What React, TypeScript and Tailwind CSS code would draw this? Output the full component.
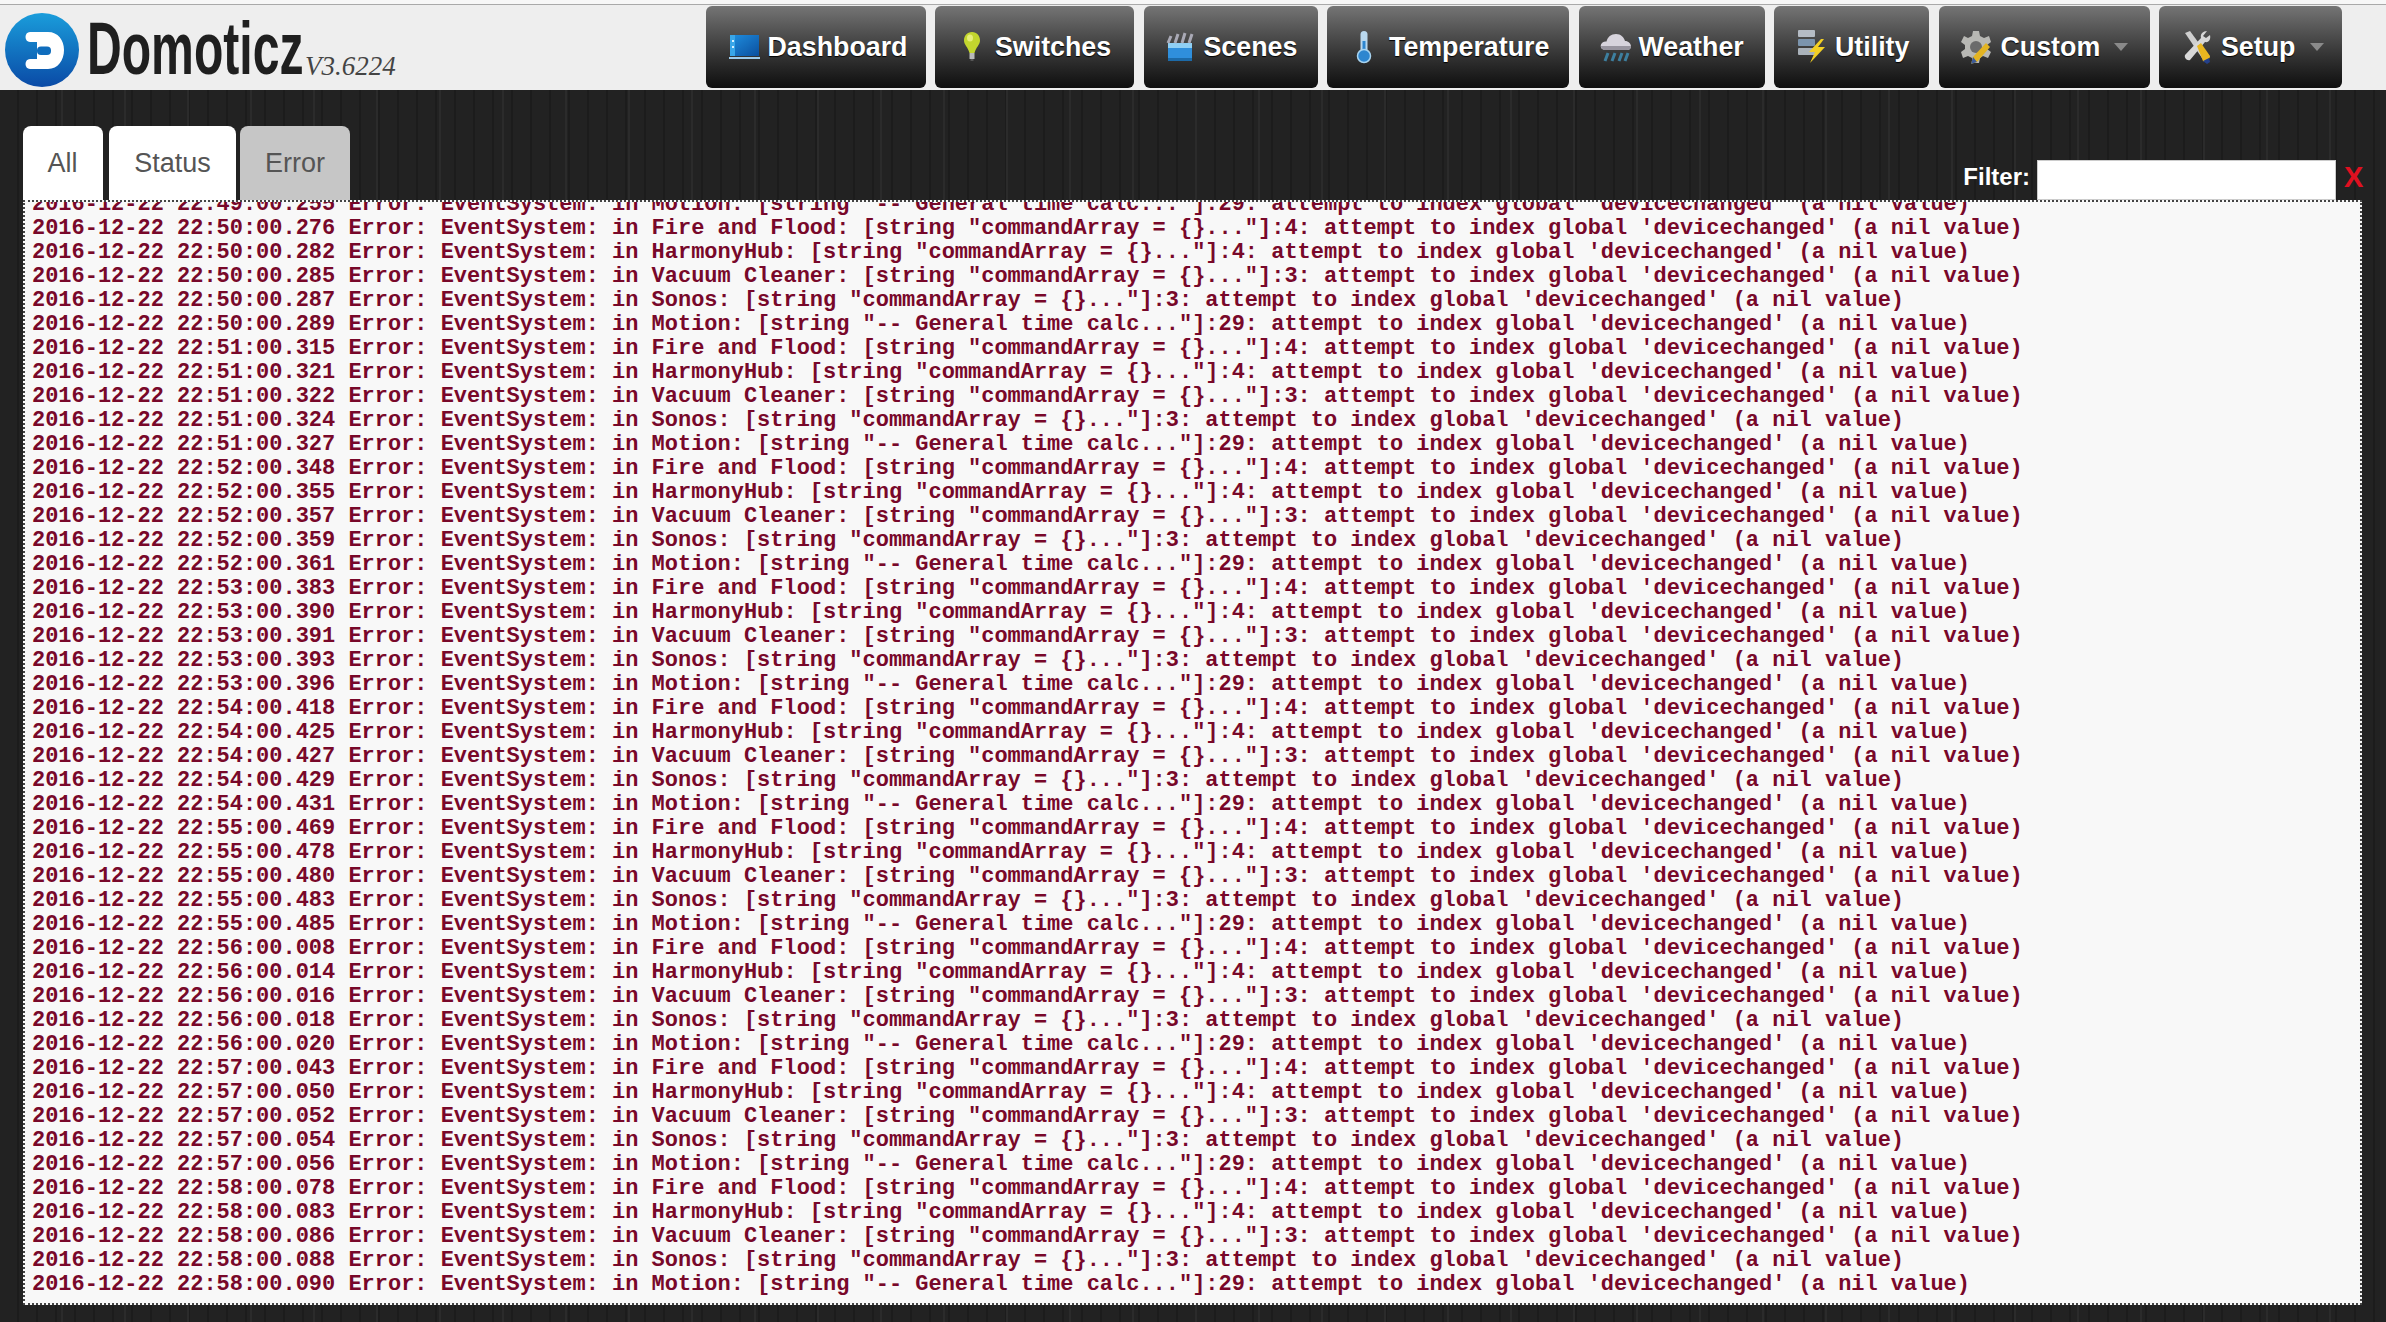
import React from 'react';

const DashboardIcon = () => (
  <svg width="31" height="27" viewBox="0 0 31 27">
    <defs>
      <linearGradient id="dash" x1="0" y1="0" x2="1" y2="1">
        <stop offset="0" stopColor="#1f8fe0" />
        <stop offset="1" stopColor="#0b4f9e" />
      </linearGradient>
    </defs>
    <rect x="1" y="1" width="29" height="21" fill="url(#dash)" />
    <rect x="1" y="1" width="5" height="21" fill="#39a6e8" />
    <rect x="3" y="6" width="2" height="2" fill="#d8f0ff" />
    <rect x="3" y="12" width="2" height="2" fill="#d8f0ff" />
    <rect x="0" y="23" width="31" height="2" fill="#9ccbec" />
  </svg>
);

const BulbIcon = () => (
  <svg width="20" height="32" viewBox="0 0 20 32">
    <path d="M10 1C5 1 2 5 2 9.500C2 14 6 16 7.500 22H12.500C14 16 18 14 18 9.500C18 5 15 1 10 1Z" fill="#c3d62e" />
    <ellipse cx="8" cy="7" rx="3" ry="3.500" fill="#e6ee7a" />
    <rect x="7.500" y="22" width="5" height="6" fill="#b9b9b9" />
    <rect x="8.500" y="28" width="3" height="2" fill="#555" />
  </svg>
);

const ScenesIcon = () => (
  <svg width="28" height="32" viewBox="0 0 28 32">
    <rect x="2" y="12" width="24" height="18" fill="#2f8fdc" />
    <rect x="2" y="12" width="24" height="5" fill="#8fd0f5" />
    <path d="M2 12 L5 5 M9 12 L12 3 M16 12 L19 2 M23 12 L26 3" stroke="#a9a9b5" strokeWidth="3" />
    <rect x="2" y="27" width="24" height="3" fill="#1c6aa8" />
  </svg>
);

const ThermometerIcon = () => (
  <svg width="16" height="34" viewBox="0 0 16 34">
    <rect x="4.500" y="1" width="7" height="24" rx="3.500" fill="#b9d8ee" />
    <rect x="6.500" y="11" width="3" height="14" fill="#2e86cf" />
    <circle cx="8" cy="26" r="6.500" fill="#2e86cf" />
    <circle cx="8" cy="26" r="6.500" fill="none" stroke="#a8d4f0" strokeWidth="1.500" />
  </svg>
);

const WeatherIcon = () => (
  <svg width="32" height="32" viewBox="0 0 32 32">
    <path d="M6 19C2 19 0 16.500 1 13.500C2 11 4.500 10 6.500 10.500C7.500 6 11 3 16 3C21 3 24 6.500 25 10C28.500 10 31 12.500 31 15.500C31 18 29 19 27 19Z" fill="#d6d3dc" />
    <path d="M6 19C2 19 1 17 1 15H31C31 18 29 19 27 19Z" fill="#97949f" />
    <path d="M8 22L5 30M15 22L12 30M22 22L19 30M28 22L25 30" stroke="#3d7f9f" strokeWidth="3" />
  </svg>
);

const UtilityIcon = () => (
  <svg width="30" height="36" viewBox="0 0 30 36">
    <rect x="1" y="1" width="17" height="7" rx="1" fill="#b5bcc5" />
    <rect x="1" y="10" width="17" height="7" rx="1" fill="#7b94ad" />
    <rect x="1" y="19" width="17" height="7" rx="1" fill="#aab2ba" />
    <path d="M24 10L12 23H18L13 34L28 18H21L27 10Z" fill="#f3d024" />
  </svg>
);

const CustomIcon = () => (
  <svg width="32" height="36" viewBox="0 0 32 36">
    <path d="M13 2H19L20 7L24 9L29 7L31 13L27 16V20L31 23L28 29L23 27L20 29L19 34H13L12 29L8 27L3 29L1 23L5 20V16L1 13L4 7L8 9L12 7Z" fill="#b8b8b4" />
    <circle cx="16" cy="18" r="6" fill="#6b6b6b" />
    <path d="M26 14L30 18L17 33L11 35L13 28Z" fill="#e3b422" />
    <path d="M11 35L13 28L17 33Z" fill="#3c5b9a" />
  </svg>
);

const SetupIcon = () => (
  <svg width="28" height="36" viewBox="0 0 28 36">
    <path d="M2 4L7 2L26 28L21 32Z" fill="#cfcfcf" />
    <path d="M24 2C20 2 17 5 18 9L2 26C1 29 4 32 7 31L22 13C26 14 28 10 27 6L23 9L20 7Z" fill="#d8d8d8" />
    <path d="M14 17L18 14L27 27C27 30 23 33 20 32Z" fill="#eab71f" />
    <path d="M20 32L24 35L27 33L26 29Z" fill="#24408a" />
  </svg>
);

const Caret = () => (
  <svg width="14" height="8" viewBox="0 0 14 8">
    <path d="M0 0H14L7 8Z" fill="#8a8a8a" />
  </svg>
);

const navItems = [
  { label: 'Dashboard', icon: <DashboardIcon />, box: 'w-[220px] pl-[23px] gap-[8px]' },
  { label: 'Switches', icon: <BulbIcon />, box: 'w-[199px] pl-[27px] gap-[13px]' },
  { label: 'Scenes', icon: <ScenesIcon />, box: 'w-[174px] pl-[22px] gap-[10px]' },
  { label: 'Temperature', icon: <ThermometerIcon />, box: 'w-[242px] pl-[29px] gap-[17px]' },
  { label: 'Weather', icon: <WeatherIcon />, box: 'w-[186px] pl-[21px] gap-[7px]' },
  { label: 'Utility', icon: <UtilityIcon />, box: 'w-[155px] pl-[23px] gap-[8px]' },
  { label: 'Custom', icon: <CustomIcon />, box: 'w-[211px] pl-[21px] gap-[9px]', caret: true },
  { label: 'Setup', icon: <SetupIcon />, box: 'w-[183px] pl-[24px] gap-[10px]', caret: true },
];

const sources = [
  { name: 'Fire and Flood', chunk: '"commandArray = {}..."', line: 4 },
  { name: 'HarmonyHub', chunk: '"commandArray = {}..."', line: 4 },
  { name: 'Vacuum Cleaner', chunk: '"commandArray = {}..."', line: 3 },
  { name: 'Sonos', chunk: '"commandArray = {}..."', line: 3 },
  { name: 'Motion', chunk: '"-- General time calc..."', line: 29 },
];

const minutes = [
  { time: '22:50', ms: ['276', '282', '285', '287', '289'] },
  { time: '22:51', ms: ['315', '321', '322', '324', '327'] },
  { time: '22:52', ms: ['348', '355', '357', '359', '361'] },
  { time: '22:53', ms: ['383', '390', '391', '393', '396'] },
  { time: '22:54', ms: ['418', '425', '427', '429', '431'] },
  { time: '22:55', ms: ['469', '478', '480', '483', '485'] },
  { time: '22:56', ms: ['008', '014', '016', '018', '020'] },
  { time: '22:57', ms: ['043', '050', '052', '054', '056'] },
  { time: '22:58', ms: ['078', '083', '086', '088', '090'] },
];

const logLine = (stamp: string, src: (typeof sources)[number]) =>
  `2016-12-22 ${stamp} Error: EventSystem: in ${src.name}: [string ${src.chunk}]:${src.line}: attempt to index global 'devicechanged' (a nil value)`;

const logLines = [
  logLine('22:49:00.255', sources[4]),
  ...minutes.flatMap((m) => m.ms.map((ms, i) => logLine(`${m.time}:00.${ms}`, sources[i]))),
];

function App() {
  return (
    <div className="h-screen flex flex-col overflow-hidden font-['Liberation_Sans',Arial,sans-serif] bg-[#222222] bg-[image:repeating-linear-gradient(90deg,transparent_0px,transparent_61px,#2b2b2b_61px,#2b2b2b_63px),repeating-linear-gradient(90deg,transparent_0px,transparent_17px,#1c1c1c_17px,#1c1c1c_19px)]">
      {/* Header */}
      <div className="h-[5px] shrink-0 bg-[#f7f7f7] border-b border-b-[#a9a9a9]" />
      <header className="h-[85px] shrink-0 flex items-start bg-[#eeeeee]">
        <div className="flex items-start">
          <svg width="86" height="85" viewBox="0 0 86 85" className="shrink-0">
            <defs>
              <linearGradient id="logo" x1="0" y1="0" x2="0" y2="1">
                <stop offset="0" stopColor="#1a9ddb" />
                <stop offset="1" stopColor="#0a4aa6" />
              </linearGradient>
            </defs>
            <circle cx="42" cy="45" r="37" fill="url(#logo)" />
            <path d="M30 27H48C58 27 64 35 64 45C64 55 58 64 48 64H30C24 64 24 54 30 54H37V37H30C24 37 24 27 30 27Z" fill="#ffffff" />
            <rect x="37" y="41.500" width="14" height="8.500" rx="4" fill="#0f6dbd" />
          </svg>
          <div className="w-[218px] ml-[1px] mt-[2px] overflow-visible">
            <span className="block origin-left scale-x-[0.65] text-[74px] leading-[84px] font-bold text-[#1f1f1f] whitespace-nowrap">Domoticz</span>
          </div>
          <span className="mt-[45px] font-['Liberation_Serif',serif] italic text-[27px] leading-[32px] text-[#444444]">V3.6224</span>
        </div>

        {/* Nav */}
        <nav className="ml-auto mr-[44px] mt-[1px] flex gap-[9.5px]">
          {navItems.map((item) => (
            <button
              key={item.label}
              className={`${item.box} h-[82px] flex items-center justify-start rounded-md bg-gradient-to-b from-[#757575] to-[#0f0f0f] text-white font-bold text-[26.8px] [text-shadow:0_1px_1px_#000]`}
            >
              {item.icon}
              <span>{item.label}</span>
              {item.caret && <span className="ml-[5px] flex"><Caret /></span>}
            </button>
          ))}
        </nav>
      </header>

      {/* Log page */}
      <main className="flex-1 min-h-0 flex flex-col pt-[36px] pl-[23px] pr-[24px] pb-[17px]">
        <div className="shrink-0 flex items-end justify-between">
          <div className="flex items-end">
            <div className="h-[74px] w-[80px] pr-[1px] flex items-center justify-center rounded-t-lg bg-white text-[#555555] text-[27px]">All</div>
            <div className="h-[74px] w-[127px] ml-[6px] flex items-center justify-center rounded-t-lg bg-white text-[#555555] text-[27px]">Status</div>
            <div className="h-[74px] w-[110px] ml-[4px] flex items-center justify-center rounded-t-lg bg-[#c6c6c6] text-[#555555] text-[27px]">Error</div>
          </div>
          <div className="flex items-end -mr-[3px]">
            <span className="mb-[7px] mr-[7px] text-white font-bold text-[24px] leading-[32px]">Filter:</span>
            <input className="h-[40px] w-[299px] bg-white border border-[#cccccc] outline-none" />
            <span className="mb-[7px] ml-[8px] w-[21px] text-[#e01020] font-bold text-[29px] leading-[32px]">X</span>
          </div>
        </div>

        <div className="flex-1 min-h-0 flex flex-col justify-end overflow-hidden bg-[#f8f8f8] border-2 border-dotted border-[#444444] pl-[7px] pb-[6px] font-['Liberation_Mono','Courier_New',monospace] font-bold text-[21.98px] leading-[24px] text-[#78082a]">
          {logLines.map((line, i) => (
            <div key={i} className="shrink-0 whitespace-pre">{line}</div>
          ))}
        </div>
      </main>
    </div>
  );
}

export default App;
